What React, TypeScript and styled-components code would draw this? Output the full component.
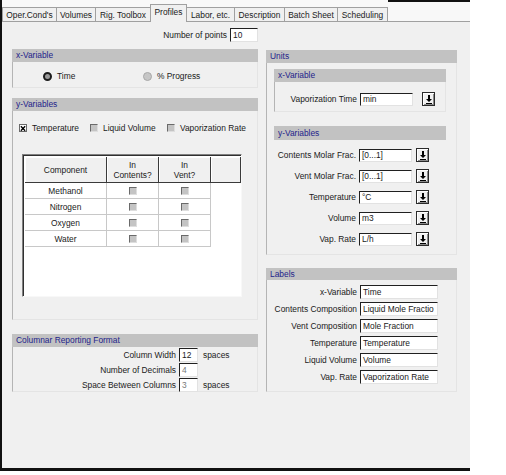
import React from "react";
import styled, { createGlobalStyle } from "styled-components";

const GlobalStyle = createGlobalStyle`
  html, body { margin: 0; padding: 0; background: #fff; }
  body { font-family: "Liberation Sans", Arial, sans-serif; font-size: 8.4px; color: #1a1a1a; }
  * { box-sizing: border-box; }
`;

const tabs = [
    { label: "Oper.Cond's", w: 55 },
    { label: "Volumes", w: 40 },
    { label: "Rig. Toolbox", w: 56 },
    { label: "Profiles", w: 37, active: true },
    { label: "Labor, etc.", w: 49 },
    { label: "Description", w: 51 },
    { label: "Batch Sheet", w: 54 },
    { label: "Scheduling", w: 51 },
];

const components = ["Methanol", "Nitrogen", "Oxygen", "Water"];

const unitRows = [
    { label: "Contents Molar Frac.", value: "[0...1]" },
    { label: "Vent Molar Frac.", value: "[0...1]" },
    { label: "Temperature", value: "°C" },
    { label: "Volume", value: "m3" },
    { label: "Vap. Rate", value: "L/h" },
];

const labelRows = [
    { label: "x-Variable", value: "Time" },
    { label: "Contents Composition", value: "Liquid Mole Fractio" },
    { label: "Vent Composition", value: "Mole Fraction" },
    { label: "Temperature", value: "Temperature" },
    { label: "Liquid Volume", value: "Volume" },
    { label: "Vap. Rate", value: "Vaporization Rate" },
];

function DownArrow(): React.ReactElement {
    return (
        <svg width="8" height="9" viewBox="0 0 8 9">
            <path d="M3 0h2v4h2L4 7 1 4h2z" fill="#000" />
            <rect x="1" y="8" width="6" height="1" fill="#000" />
        </svg>
    );
}

function CheckMark(): React.ReactElement {
    return (
        <svg width="7" height="7" viewBox="0 0 7 7">
            <path d="M1 1L6 6M6 1L1 6" stroke="#000" strokeWidth="1.6" />
        </svg>
    );
}

function App(): React.ReactElement {
    return (
        <>
            <GlobalStyle />
            <Window>
                <TabStrip>
                    {tabs.map((t) => (
                        <Tab key={t.label} $w={t.w} $active={t.active}>{t.label}</Tab>
                    ))}
                    <TabFiller />
                </TabStrip>

                <Body>
                    <PointsRow>
                        <span>Number of points</span>
                        <TextBox $w={28} $h={14}>10</TextBox>
                    </PointsRow>
                    <span />

                    <Column>
                        <GroupHeader>x-Variable</GroupHeader>
                        <GroupBody $h={26}>
                            <RadioRow>
                                <Option>
                                    <Radio $on />
                                    <span>Time</span>
                                </Option>
                                <Option>
                                    <Radio />
                                    <span>% Progress</span>
                                </Option>
                            </RadioRow>
                        </GroupBody>

                        <GroupHeader $mt={10}>y-Variables</GroupHeader>
                        <GroupBody $h={209}>
                            <CheckRow>
                                <Option>
                                    <CheckBox $checked><CheckMark /></CheckBox>
                                    <span>Temperature</span>
                                </Option>
                                <Option>
                                    <CheckBox />
                                    <span>Liquid Volume</span>
                                </Option>
                                <Option>
                                    <CheckBox />
                                    <span>Vaporization Rate</span>
                                </Option>
                            </CheckRow>
                            <Grid>
                                <GridHead>
                                    <HeadCell>Component</HeadCell>
                                    <HeadCell>In<br />Contents?</HeadCell>
                                    <HeadCell>In<br />Vent?</HeadCell>
                                    <HeadCell />
                                </GridHead>
                                {components.map((c) => (
                                    <GridRow key={c}>
                                        <Cell>{c}</Cell>
                                        <Cell><CheckBox /></Cell>
                                        <Cell><CheckBox /></Cell>
                                    </GridRow>
                                ))}
                            </Grid>
                        </GroupBody>

                        <GroupHeader $mt={14}>Columnar Reporting Format</GroupHeader>
                        <GroupBody $h={45}>
                            <FormatRows>
                                <FieldRow $label={163}>
                                    <FieldLabel>Column Width</FieldLabel>
                                    <TextBox $w={19} $h={14}>12</TextBox>
                                    <Unit>spaces</Unit>
                                </FieldRow>
                                <FieldRow $label={163}>
                                    <FieldLabel>Number of Decimals</FieldLabel>
                                    <TextBox $w={19} $h={14} $dim>4</TextBox>
                                </FieldRow>
                                <FieldRow $label={163}>
                                    <FieldLabel>Space Between Columns</FieldLabel>
                                    <TextBox $w={19} $h={14} $dim>3</TextBox>
                                    <Unit>spaces</Unit>
                                </FieldRow>
                            </FormatRows>
                        </GroupBody>
                    </Column>

                    <Column $mt={1}>
                        <GroupHeader>Units</GroupHeader>
                        <GroupBody $h={192}>
                            <Inset>
                                <GroupHeader>x-Variable</GroupHeader>
                                <GroupBody $h={30}>
                                    <FieldRow $label={82} $mt={10}>
                                        <FieldLabel>Vaporization Time</FieldLabel>
                                        <TextBox $w={53} $h={13}>min</TextBox>
                                        <DropButton $ml={6}><DownArrow /></DropButton>
                                    </FieldRow>
                                </GroupBody>

                                <GroupHeader $mt={14} $h={14}>y-Variables</GroupHeader>
                                <UnitRows>
                                    {unitRows.map((r) => (
                                        <FieldRow key={r.label} $label={82}>
                                            <FieldLabel>{r.label}</FieldLabel>
                                            <TextBox $w={53} $h={13}>{r.value}</TextBox>
                                            <DropButton $ml={1}><DownArrow /></DropButton>
                                        </FieldRow>
                                    ))}
                                </UnitRows>
                            </Inset>
                        </GroupBody>

                        <GroupHeader $mt={13} $h={12}>Labels</GroupHeader>
                        <GroupBody $h={112}>
                            <LabelRows>
                                {labelRows.map((r) => (
                                    <FieldRow key={r.label} $label={90}>
                                        <FieldLabel>{r.label}</FieldLabel>
                                        <TextBox $w={78} $h={14}>{r.value}</TextBox>
                                    </FieldRow>
                                ))}
                            </LabelRows>
                        </GroupBody>
                    </Column>
                </Body>
            </Window>
        </>
    );
}

const Window = styled.div`
    width: 470px;
    height: 471px;
    background: #f0f0f0;
    border-left: 2px solid #111;
    border-bottom: 3px solid #111;
`;

const TabStrip = styled.div`
    height: 22px;
    display: flex;
    align-items: flex-end;
    padding-left: 1px;
    background: #f8f8f8;
    border-bottom: 1px solid #a0a0a0;
`;

const Tab = styled.div<{ $w: number; $active?: boolean }>`
    width: ${(p) => p.$w}px;
    height: ${(p) => (p.$active ? 18 : 14)}px;
    margin-left: -1px;
    margin-bottom: ${(p) => (p.$active ? -1 : 0)}px;
    position: relative;
    z-index: ${(p) => (p.$active ? 1 : 0)};
    border: 1px solid #a0a0a0;
    border-bottom: none;
    background: #f0f0f0;
    display: flex;
    justify-content: center;
    align-items: ${(p) => (p.$active ? "flex-start" : "center")};
    padding-top: ${(p) => (p.$active ? 2 : 0)}px;
    white-space: nowrap;
`;

const TabFiller = styled.div`
    flex: 1;
    align-self: stretch;
    border-top: 2px solid #111;
`;

const Body = styled.div`
    display: grid;
    grid-template-columns: 246px 191px;
    column-gap: 8px;
    row-gap: 7px;
    padding: 6px 0 0 10px;
    align-items: start;
`;

const PointsRow = styled.div`
    display: flex;
    justify-content: flex-end;
    align-items: center;
    gap: 3px;
    height: 14px;
`;

const Column = styled.div<{ $mt?: number }>`
    display: flex;
    flex-direction: column;
    margin-top: ${(p) => p.$mt ?? 0}px;
`;

const GroupHeader = styled.div<{ $mt?: number; $h?: number }>`
    height: ${(p) => p.$h ?? 13}px;
    line-height: ${(p) => p.$h ?? 13}px;
    margin-top: ${(p) => p.$mt ?? 0}px;
    padding-left: 4px;
    background: #c2c2c2;
    color: #1e1e8a;
`;

const GroupBody = styled.div<{ $h: number }>`
    height: ${(p) => p.$h}px;
    border-left: 1px solid #b4b4b4;
    border-right: 1px solid #e4e4e4;
    border-bottom: 1px solid #e4e4e4;
`;

const Inset = styled.div`
    display: flex;
    flex-direction: column;
    padding: 6px 10px 0 7px;
`;

const RadioRow = styled.div`
    display: grid;
    grid-template-columns: 100px auto;
    align-items: center;
    height: 12px;
    margin-top: 8px;
    padding-left: 30px;
`;

const Option = styled.div`
    display: flex;
    align-items: center;
    gap: 5px;
`;

const Radio = styled.span<{ $on?: boolean }>`
    width: 9px;
    height: 9px;
    border-radius: 50%;
    background: ${(p) => (p.$on ? "#9a9a9a" : "#c6c6c6")};
    border: ${(p) => (p.$on ? "2px solid #1c1c1c" : "1px solid #a8a8a8")};
`;

const CheckRow = styled.div`
    display: grid;
    grid-template-columns: 71px 77px auto;
    align-items: center;
    height: 14px;
    margin-top: 10px;
    padding-left: 6px;
`;

const CheckBox = styled.span<{ $checked?: boolean }>`
    width: 8px;
    height: 8px;
    display: inline-flex;
    align-items: center;
    justify-content: center;
    background: ${(p) => (p.$checked ? "#fff" : "#c4c4c4")};
    border-top: 1px solid #6a6a6a;
    border-left: 1px solid #6a6a6a;
    border-right: 1px solid ${(p) => (p.$checked ? "#6a6a6a" : "#dedede")};
    border-bottom: 1px solid ${(p) => (p.$checked ? "#6a6a6a" : "#dedede")};
`;

const Grid = styled.div`
    width: 220px;
    height: 143px;
    margin: 19px 0 0 9px;
    background: #fff;
    border: 1px solid;
    border-color: #808080 #f8f8f8 #f8f8f8 #808080;
    box-shadow: inset 1px 1px #303030;
    padding: 2px 0 0 2px;
`;

const GridHead = styled.div`
    display: grid;
    grid-template-columns: 82px 52px 52px 1fr;
    height: 26px;
`;

const HeadCell = styled.div`
    display: flex;
    align-items: center;
    justify-content: center;
    text-align: center;
    line-height: 10px;
    background: #f0f0f0;
    border-right: 1px solid #3a3a3a;
    border-bottom: 1px solid #3a3a3a;
    box-shadow: inset 1px 1px #fff;
`;

const GridRow = styled.div`
    display: grid;
    grid-template-columns: 82px 52px 52px;
    height: 16px;
`;

const Cell = styled.div`
    display: flex;
    align-items: center;
    justify-content: center;
    border-right: 1px solid #c8c8c8;
    border-bottom: 1px solid #c8c8c8;
`;

const FormatRows = styled.div`
    display: flex;
    flex-direction: column;
    gap: 1px;
    padding-top: 1px;
`;

const UnitRows = styled.div`
    display: flex;
    flex-direction: column;
    gap: 7px;
    padding-top: 8px;
`;

const LabelRows = styled.div`
    display: flex;
    flex-direction: column;
    gap: 3px;
    padding-top: 5px;
`;

const FieldRow = styled.div<{ $label: number; $mt?: number }>`
    display: grid;
    grid-template-columns: ${(p) => p.$label}px auto auto auto;
    justify-content: start;
    align-items: center;
    column-gap: 3px;
    margin-top: ${(p) => p.$mt ?? 0}px;
`;

const FieldLabel = styled.span`
    text-align: right;
    white-space: nowrap;
`;

const Unit = styled.span`
    margin-left: 2px;
`;

const TextBox = styled.div<{ $w: number; $h: number; $dim?: boolean }>`
    width: ${(p) => p.$w}px;
    height: ${(p) => p.$h}px;
    line-height: ${(p) => p.$h - 2}px;
    padding-left: 2px;
    background: #fff;
    color: ${(p) => (p.$dim ? "#7a7a7a" : "#1a1a1a")};
    border-top: 1px solid #202020;
    border-left: 1px solid #202020;
    border-right: 1px solid #e2e2e2;
    border-bottom: 1px solid #e2e2e2;
    white-space: nowrap;
    overflow: hidden;
`;

const DropButton = styled.div<{ $ml: number }>`
    width: 13px;
    height: 14px;
    margin-left: ${(p) => p.$ml}px;
    display: flex;
    align-items: center;
    justify-content: center;
    background: #f0f0f0;
    border: 1px solid #2a2a2a;
    box-shadow: inset 1px 1px #fff, inset -1px -1px #8a8a8a;
`;

export default App;
